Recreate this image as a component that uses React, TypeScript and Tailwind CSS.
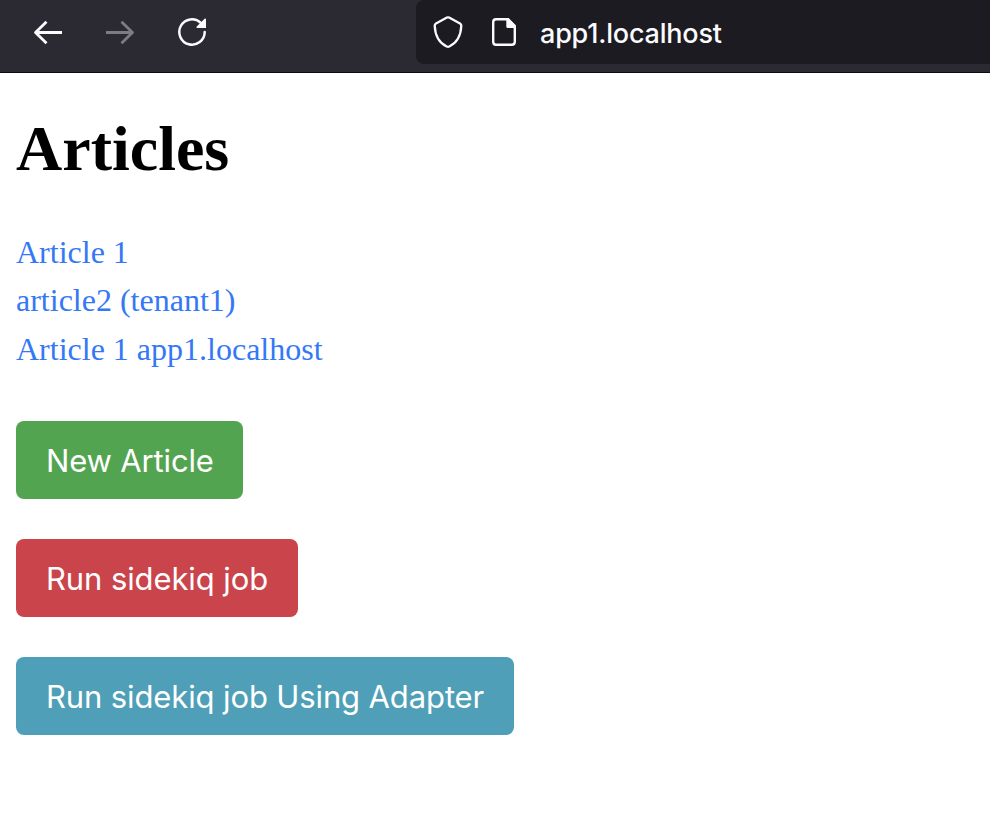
import React from 'react';

const links = ['Article 1', 'article2 (tenant1)', 'Article 1 app1.localhost'];

const buttons = [
  { label: 'New Article', style: 'w-[227px] bg-[#53a451] tracking-[-0.15px]' },
  { label: 'Run sidekiq job', style: 'w-[282px] bg-[#ca444b] tracking-[-0.1px]' },
  { label: 'Run sidekiq job Using Adapter', style: 'w-[498px] bg-[#4e9fb7] tracking-[-0.12px]' },
];

function BrowserBar() {
  return (
    <header className="flex h-[73px] items-start border-b border-[#0c0c0d] bg-[#2b2a33]">
      <nav className="flex w-[416px] gap-8 pt-3 pl-7">
        <svg className="size-10" viewBox="0 0 40 40" fill="none" stroke="#fbfbfe" strokeWidth="2.8" strokeLinejoin="round">
          <path d="M34 20.5H7.5M18.5 9.7L7.5 20.5L18.5 31.3" />
        </svg>
        <svg className="size-10" viewBox="0 0 40 40" fill="none" stroke="#7d7c83" strokeWidth="2.8" strokeLinejoin="round">
          <path d="M6 20.5H32.5M21.5 9.7L32.5 20.5L21.5 31.3" />
        </svg>
        <svg className="size-10" viewBox="0 0 40 40" fill="none">
          <path d="M32.7 20A12.7 12.7 0 1 1 28.8 10.8" stroke="#fbfbfe" strokeWidth="2.5" strokeLinecap="round" />
          <path d="M34 7.4V16H25.2C24.5 16 24.2 15.1 24.7 14.6L32.6 6.7C33.1 6.2 34 6.6 34 7.4Z" fill="#fbfbfe" />
        </svg>
      </nav>
      <div className="flex h-16 grow items-center rounded-l-lg bg-[#1c1b22] pl-3">
        <svg className="size-10" viewBox="0 0 40 40" fill="none" stroke="#fbfbfe" strokeWidth="2.3" strokeLinejoin="round">
          <path d="M18.9 5.6Q20 5 21.1 5.6L32 11.4Q33.4 12.2 33.3 13.8C32.8 24.5 28.8 31 21.3 34.5Q20 35.2 18.7 34.5C11.2 31 7.2 24.5 6.7 13.8Q6.6 12.2 8 11.4Z" />
        </svg>
        <svg className="ml-4 size-10" viewBox="0 0 40 40" fill="none">
          <path d="M12 7.2H23.8L30.8 14.2V29.8Q30.8 32.8 27.8 32.8H12Q9.2 32.8 9.2 29.8V10.2Q9.2 7.2 12 7.2Z" stroke="#fbfbfe" strokeWidth="2.4" />
          <path d="M22.3 6H24.5L32 13.5V16H23.8Q22.3 16 22.3 14.5Z" fill="#fbfbfe" />
        </svg>
        <span className="ml-4 pt-[3px] font-[Inter,sans-serif] text-[27px] leading-10 font-medium tracking-[-0.2px] text-[#fbfbfe]">app1.localhost</span>
      </div>
    </header>
  );
}

export default function App() {
  return (
    <div className="min-h-[836px] bg-white">
      <BrowserBar />
      <main className="px-4 pt-[38px]">
        <h1 className="font-['Liberation_Serif',serif] text-[64px] leading-[76px] font-bold text-black">Articles</h1>
        <ul className="mt-[41px] font-['Liberation_Serif',serif] text-[32px] leading-[48.4px] text-[#3478f6]">
          {links.map((text) => (
            <li key={text}>
              <a href="#">{text}</a>
            </li>
          ))}
        </ul>
        <div className="mt-12 flex flex-col items-start gap-10">
          {buttons.map(({ label, style }) => (
            <button key={label} className={`h-[78px] rounded-lg pt-0.5 pl-[30px] text-left font-[Inter,sans-serif] text-[31px] whitespace-nowrap text-white ${style}`}>
              {label}
            </button>
          ))}
        </div>
      </main>
    </div>
  );
}
